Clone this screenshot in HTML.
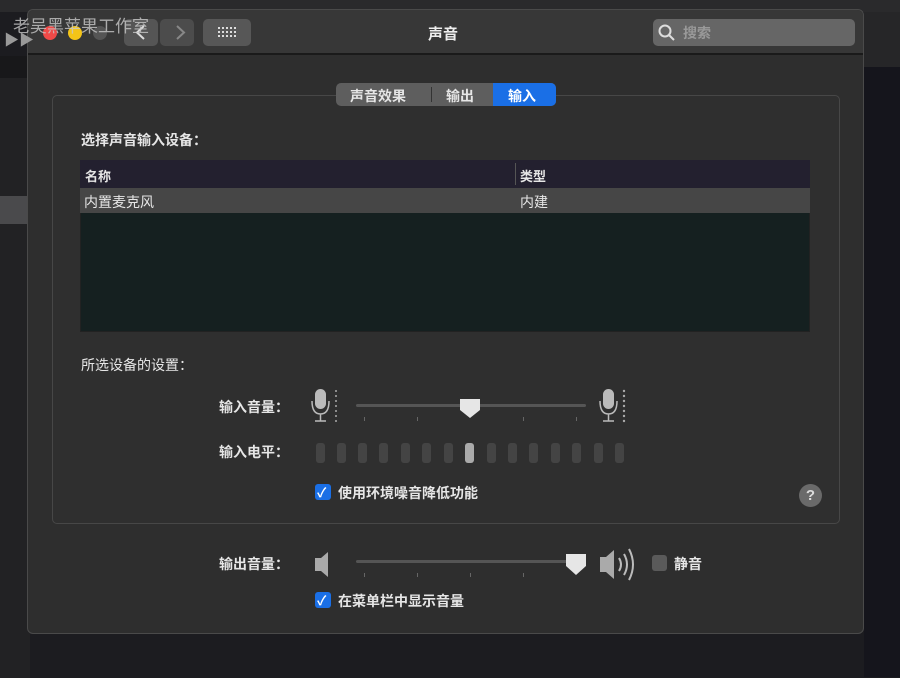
<!DOCTYPE html>
<html><head><meta charset="utf-8"><style>
*{margin:0;padding:0;box-sizing:border-box}
body{width:900px;height:677px;background:#1c1c20;position:relative;overflow:hidden;font-family:"Liberation Sans","Noto Sans CJK SC",sans-serif;color:#e6e6e6;font-size:14px}
.a{position:absolute}
.t{position:absolute;white-space:nowrap;font-weight:bold}
</style></head><body>
<div class="a" style="left:0;top:0;width:900px;height:12px;background:#2a2a2c"></div>
<div class="a" style="left:0;top:56px;width:30px;height:22px;background:#18181a"></div>
<div class="a" style="left:0;top:78px;width:30px;height:600px;background:#222224"></div>
<div class="a" style="left:0;top:196px;width:28px;height:28px;background:#4a4a4c"></div>
<div class="a" style="left:864px;top:12px;width:36px;height:55px;background:#262628"></div>
<div class="a" style="left:864px;top:67px;width:36px;height:610px;background:#15151c"></div>
<!-- window -->
<div class="a" style="left:27px;top:9px;width:837px;height:625px;background:#2e2e2e;border:1px solid #4a4a4a;border-radius:6px"></div>
<div class="a" style="left:28px;top:10px;width:835px;height:45px;background:#373737;border-bottom:2px solid #1a1a1a;border-radius:6px 6px 0 0"></div>
<div class="a" style="left:43px;top:26px;width:14px;height:14px;border-radius:50%;background:#f04a48"></div>
<div class="a" style="left:68px;top:26px;width:14px;height:14px;border-radius:50%;background:#f4c418"></div>
<div class="a" style="left:93px;top:26px;width:14px;height:14px;border-radius:50%;background:#555"></div>
<div class="a" style="left:124px;top:19px;width:34px;height:27px;border-radius:5px;background:#555"></div>
<div class="a" style="left:160px;top:19px;width:34px;height:27px;border-radius:5px;background:#4c4c4c"></div>
<svg class="a" style="left:124px;top:19px" width="70" height="27"><path d="M20 7 L13 13.5 L20 20" stroke="#ddd" stroke-width="2" fill="none"/><path d="M53 7 L60 13.5 L53 20" stroke="#888" stroke-width="2" fill="none"/></svg>
<div class="a" style="left:203px;top:19px;width:48px;height:27px;border-radius:5px;background:#575757"></div>
<svg class="a" style="left:216px;top:25px" width="22" height="14"><g fill="#ddd"><rect x="2" y="2" width="2" height="2"/><rect x="6" y="2" width="2" height="2"/><rect x="10" y="2" width="2" height="2"/><rect x="14" y="2" width="2" height="2"/><rect x="18" y="2" width="2" height="2"/><rect x="2" y="6" width="2" height="2"/><rect x="6" y="6" width="2" height="2"/><rect x="10" y="6" width="2" height="2"/><rect x="14" y="6" width="2" height="2"/><rect x="18" y="6" width="2" height="2"/><rect x="2" y="10" width="2" height="2"/><rect x="6" y="10" width="2" height="2"/><rect x="10" y="10" width="2" height="2"/><rect x="14" y="10" width="2" height="2"/><rect x="18" y="10" width="2" height="2"/></g></svg>
<div class="t" style="left:428px;top:23px;font-size:15px;color:#eee">声音</div>
<div class="a" style="left:653px;top:19px;width:202px;height:27px;border-radius:5px;background:#666"></div>
<svg class="a" style="left:657px;top:23px" width="20" height="20"><circle cx="8" cy="8" r="5.5" stroke="#ddd" stroke-width="2" fill="none"/><path d="M12 12 L17 17" stroke="#ddd" stroke-width="2"/></svg>
<div class="t" style="left:683px;top:23px;color:#999;font-size:14px">搜索</div>
<div class="t" style="left:13px;top:12px;font-weight:normal;font-size:17px;color:rgba(200,200,200,0.8)">老吴黑苹果工作室</div>
<div class="t" style="left:4px;top:29px;color:#999;font-size:15px">▶▶</div>
<!-- group box -->
<div class="a" style="left:52px;top:95px;width:788px;height:429px;border:1px solid #474747;border-radius:5px;background:#2f2f2f"></div>
<div class="a" style="left:336px;top:83px;width:220px;height:23px;border-radius:5px;background:#5e5e5e"></div>
<div class="a" style="left:493px;top:83px;width:63px;height:23px;border-radius:0 5px 5px 0;background:#1a6fe6"></div>
<div class="a" style="left:431px;top:87px;width:1px;height:15px;background:#333"></div>
<div class="t" style="left:350px;top:86px">声音效果</div>
<div class="t" style="left:446px;top:86px">输出</div>
<div class="t" style="left:508px;top:86px;color:#fff">输入</div>
<div class="t" style="left:81px;top:130px;font-size:14px">选择声音输入设备：</div>
<div class="a" style="left:80px;top:160px;width:730px;height:172px;background:#152020;border:1px solid #222"></div>
<div class="a" style="left:80px;top:160px;width:730px;height:28px;background:#23202f"></div>
<div class="a" style="left:515px;top:163px;width:1px;height:22px;background:#555"></div>
<div class="a" style="left:80px;top:188px;width:730px;height:25px;background:#464646"></div>
<div class="t" style="left:85px;top:166px;font-size:13px">名称</div>
<div class="t" style="left:520px;top:166px;font-size:13px">类型</div>
<div class="t" style="left:84px;top:192px;font-weight:normal">内置麦克风</div>
<div class="t" style="left:520px;top:192px;font-weight:normal">内建</div>
<div class="t" style="left:81px;top:355px;font-weight:normal">所选设备的设置：</div>
<div class="t" style="left:219px;top:397px">输入音量：</div>
<div class="t" style="left:219px;top:442px">输入电平：</div>
<svg class="a" style="left:310px;top:387px" width="330" height="40">
<g fill="#bbb"><rect x="5" y="2" width="11" height="20" rx="5.5"/><rect x="293" y="2" width="11" height="20" rx="5.5"/></g>
<g stroke="#bbb" stroke-width="1.5" fill="none"><path d="M2 14 Q2 27 10.5 27 Q19 27 19 14 M10.5 27 V34 M5 34 H16"/><path d="M290 14 Q290 27 298.5 27 Q307 27 307 14 M298.5 27 V34 M293 34 H304"/></g>
<g fill="#aaa"><circle cx="26" cy="4" r="1"/><circle cx="26" cy="9" r="1"/><circle cx="26" cy="14" r="1"/><circle cx="26" cy="19" r="1"/><circle cx="26" cy="24" r="1"/><circle cx="26" cy="29" r="1"/><circle cx="26" cy="34" r="1"/>
<circle cx="314" cy="4" r="1.2"/><circle cx="314" cy="9" r="1.2"/><circle cx="314" cy="14" r="1.2"/><circle cx="314" cy="19" r="1.2"/><circle cx="314" cy="24" r="1.2"/><circle cx="314" cy="29" r="1.2"/><circle cx="314" cy="34" r="1.2"/></g>
<rect x="46" y="17" width="230" height="3" rx="1.5" fill="#555"/>
<g fill="#666"><rect x="54" y="30" width="1" height="4"/><rect x="107" y="30" width="1" height="4"/><rect x="213" y="30" width="1" height="4"/><rect x="266" y="30" width="1" height="4"/></g>
<path d="M150 12 H170 V23 L160 31 L150 23 Z" fill="#e6e6e6"/>
</svg>
<svg class="a" style="left:310px;top:440px" width="320" height="26">
<g fill="#444"><rect x="6" y="3" width="9" height="20" rx="3"/><rect x="27" y="3" width="9" height="20" rx="3"/><rect x="48" y="3" width="9" height="20" rx="3"/><rect x="69" y="3" width="9" height="20" rx="3"/><rect x="91" y="3" width="9" height="20" rx="3"/><rect x="112" y="3" width="9" height="20" rx="3"/><rect x="134" y="3" width="9" height="20" rx="3"/><rect x="177" y="3" width="9" height="20" rx="3"/><rect x="198" y="3" width="9" height="20" rx="3"/><rect x="219" y="3" width="9" height="20" rx="3"/><rect x="241" y="3" width="9" height="20" rx="3"/><rect x="262" y="3" width="9" height="20" rx="3"/><rect x="284" y="3" width="9" height="20" rx="3"/><rect x="305" y="3" width="9" height="20" rx="3"/></g>
<rect x="155" y="3" width="9" height="20" rx="3" fill="#aaa"/></svg>
<div class="a" style="left:315px;top:484px;width:16px;height:16px;border-radius:3px;background:#1a6fe6"></div>
<div class="t" style="left:317px;top:482px;color:#fff;font-size:13px">✓</div>
<div class="t" style="left:338px;top:483px">使用环境噪音降低功能</div>
<div class="a" style="left:799px;top:484px;width:23px;height:23px;border-radius:50%;background:#6a6a6a;color:#ddd;font-weight:bold;text-align:center;line-height:23px;font-size:15px">?</div>
<!-- output -->
<div class="t" style="left:219px;top:554px">输出音量：</div>
<svg class="a" style="left:310px;top:545px" width="340" height="40">
<path d="M5 13 H11 L18 7 V32 L11 26 H5 Z" fill="#aaa"/>
<rect x="46" y="15" width="222" height="3" rx="1.5" fill="#555"/>
<g fill="#666"><rect x="54" y="28" width="1" height="4"/><rect x="107" y="28" width="1" height="4"/><rect x="160" y="28" width="1" height="4"/><rect x="213" y="28" width="1" height="4"/></g>
<path d="M256 9 H276 V21 L266 30 L256 21 Z" fill="#e6e6e6"/>
<path d="M290 12 H296 L304 5 V34 L296 27 H290 Z" fill="#aaa"/>
<g stroke="#bbb" stroke-width="2" fill="none"><path d="M309 13 Q313 19.5 309 26"/><path d="M314 9 Q320 19.5 314 30"/><path d="M319 4 Q327 19.5 319 35"/></g>
</svg>
<div class="a" style="left:652px;top:555px;width:15px;height:16px;border-radius:3px;background:#5a5a5a"></div>
<div class="t" style="left:674px;top:554px">静音</div>
<div class="a" style="left:315px;top:592px;width:16px;height:16px;border-radius:3px;background:#1a6fe6"></div>
<div class="t" style="left:317px;top:590px;color:#fff;font-size:13px">✓</div>
<div class="t" style="left:338px;top:591px">在菜单栏中显示音量</div>
</body></html>
